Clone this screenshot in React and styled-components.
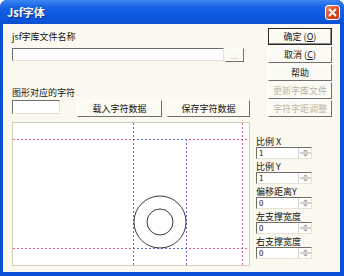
import React from 'react';
import styled, { createGlobalStyle } from 'styled-components';

const GlobalStyle = createGlobalStyle`
  html, body {
    margin: 0;
    padding: 0;
    background: #ffffff;
  }
  body {
    font-family: "Noto Sans CJK SC", "Noto Sans", sans-serif;
  }
`;

const Frame = styled.div`
  width: 344px;
  height: 276px;
  box-sizing: border-box;
  background: #0b4fd4;
  border-radius: 7px 7px 0 0;
  display: flex;
  flex-direction: column;
  overflow: hidden;
`;

const TitleBar = styled.div`
  height: 24px;
  flex: none;
  display: flex;
  align-items: center;
  justify-content: space-between;
  padding: 0 4px 0 7px;
  background: linear-gradient(#3d86f4 0%, #1763e6 30%, #0c57de 70%, #0b4fd0 100%);
  color: #ffffff;
  font-size: 11px;
  font-weight: bold;
  text-shadow: 1px 1px 0 #0a2f8a;
`;

const CloseButton = styled.div`
  width: 15px;
  height: 15px;
  box-sizing: border-box;
  border: 1px solid #ffffff;
  border-radius: 3px;
  background: linear-gradient(135deg, #ee8a62, #d4451f 60%, #b83a1a);
  display: flex;
  align-items: center;
  justify-content: center;
`;

const Body = styled.div`
  flex: 1;
  margin: 0 4px 4px 3px;
  background: #fbf9ef;
  display: flex;
  gap: 6px;
  padding: 4px 8px 0 9px;
  font-size: 9px;
  line-height: 11px;
  color: #111;
`;

const LeftColumn = styled.div`
  width: 238px;
  flex: none;
  display: flex;
  flex-direction: column;
  padding-top: 3px;
`;

const RightColumn = styled.div`
  flex: 1;
  display: flex;
  flex-direction: column;
`;

const Label = styled.div`
  height: 11px;
  margin-top: ${p => p.$gap || 0}px;
  white-space: nowrap;
`;

const Row = styled.div`
  display: flex;
  align-items: flex-start;
  margin-top: ${p => p.$gap || 0}px;
  gap: ${p => p.$spacing || 0}px;
`;

const TextBox = styled.div`
  width: ${p => p.$width}px;
  height: ${p => p.$height}px;
  box-sizing: border-box;
  background: #ffffff;
  border-top: 1px solid #6e6e6e;
  border-left: 1px solid #6e6e6e;
  border-bottom: 1px solid #e6e2d4;
  border-right: 1px solid #e6e2d4;
  margin-right: ${p => p.$after || 0}px;
`;

const Button = styled.div`
  width: ${p => p.$width}px;
  height: ${p => p.$height || 17}px;
  box-sizing: border-box;
  display: flex;
  align-items: center;
  justify-content: center;
  background: #fcfbf3;
  border-top: 1px solid #ffffff;
  border-left: 1px solid #ffffff;
  border-right: 1px solid #6f6f6f;
  border-bottom: 1px solid #6f6f6f;
  color: ${p => (p.$disabled ? '#b9b6a8' : '#111')};
  white-space: nowrap;
  flex: none;
`;

const DefaultButton = styled(Button)`
  border: 1px solid #2a2a2a;
  box-shadow: inset -1px -1px 0 #8a8a8a;
`;

const ButtonStack = styled.div`
  display: flex;
  flex-direction: column;
  align-items: flex-end;
  gap: 1px;
`;

const Canvas = styled.div`
  margin-top: 5px;
  width: 238px;
  height: 144px;
  box-sizing: border-box;
  background: #ffffff;
  border: 1px solid #d3cdbd;
  display: flex;
`;

const Fields = styled.div`
  margin-top: 19px;
  display: flex;
  flex-direction: column;
  gap: 2px;
`;

const Field = styled.div`
  display: flex;
  flex-direction: column;
`;

const SpinBox = styled.div`
  width: 56px;
  height: 12px;
  box-sizing: border-box;
  background: #ffffff;
  border-top: 1px solid #6e6e6e;
  border-left: 1px solid #6e6e6e;
  border-bottom: 1px solid #e6e2d4;
  border-right: 1px solid #e6e2d4;
  display: flex;
  align-items: center;
  justify-content: space-between;
  padding-left: 2px;
  font-size: 8px;
  line-height: 10px;
`;

const SpinArrows = () => (
  <svg width="13" height="10" viewBox="0 0 13 10">
    <line x1="0.5" y1="0" x2="0.5" y2="10" stroke="#d8d4c6" />
    <line x1="2" y1="5" x2="13" y2="5" stroke="#a8a498" />
    <path d="M5 3.5 L7.5 1.5 L10 3.5 Z" fill="#9a968a" />
    <path d="M5 6.5 L7.5 8.5 L10 6.5 Z" fill="#9a968a" />
  </svg>
);

const Guides = () => (
  <svg width="236" height="142" viewBox="0 0 236 142">
    <g strokeWidth="1" strokeDasharray="2 2" fill="none">
      <line x1="0" y1="16.5" x2="236" y2="16.5" stroke="#e0607a" />
      <line x1="0" y1="125.5" x2="236" y2="125.5" stroke="#e0607a" />
      <line x1="120" y1="16.5" x2="173" y2="16.5" stroke="#6a68d4" strokeDasharray="2 2" />
      <line x1="120" y1="125.5" x2="173" y2="125.5" stroke="#6a68d4" />
      <line x1="120.5" y1="0" x2="120.5" y2="142" stroke="#6a68d4" />
      <line x1="173.5" y1="16" x2="173.5" y2="142" stroke="#6a68d4" />
      <line x1="229.5" y1="0" x2="229.5" y2="142" stroke="#e0607a" />
    </g>
    <circle cx="147" cy="99" r="26" fill="none" stroke="#3a3a3a" strokeWidth="1" />
    <circle cx="147" cy="99" r="13" fill="none" stroke="#3a3a3a" strokeWidth="1" />
  </svg>
);

const fields = [
  { label: '比例 X', value: '1' },
  { label: '比例 Y', value: '1' },
  { label: '偏移距离Y', value: '0' },
  { label: '左支撑宽度', value: '0' },
  { label: '右支撑宽度', value: '0' },
];

const App = () => (
  <>
    <GlobalStyle />
    <Frame>
      <TitleBar>
        <span>Jsf字体</span>
        <CloseButton>
          <svg width="9" height="9" viewBox="0 0 9 9">
            <path d="M1.5 1.5 L7.5 7.5 M7.5 1.5 L1.5 7.5" stroke="#ffffff" strokeWidth="1.8" strokeLinecap="round" />
          </svg>
        </CloseButton>
      </TitleBar>
      <Body>
        <LeftColumn>
          <Label>jsf字库文件名称</Label>
          <Row $gap={6} $spacing={1}>
            <TextBox $width={212} $height={13} />
            <Button $width={19} $height={14} $disabled>...</Button>
          </Row>
          <Label $gap={25}>图形对应的字符</Label>
          <Row $gap={2} $spacing={5}>
            <TextBox $width={48} $height={14} $after={12} />
            <Button $width={85}>载入字符数据</Button>
            <Button $width={83}>保存字符数据</Button>
          </Row>
          <Canvas>
            <Guides />
          </Canvas>
        </LeftColumn>
        <RightColumn>
          <ButtonStack>
            <DefaultButton $width={64}>确定 (<u>O</u>)</DefaultButton>
            <Button $width={64}>取消 (<u>C</u>)</Button>
            <Button $width={64}>帮助</Button>
            <Button $width={64} $disabled>更新字库文件</Button>
            <Button $width={64} $disabled>字符字距调整</Button>
          </ButtonStack>
          <Fields>
            {fields.map(f => (
              <Field key={f.label}>
                <Label>{f.label}</Label>
                <SpinBox>
                  <span>{f.value}</span>
                  <SpinArrows />
                </SpinBox>
              </Field>
            ))}
          </Fields>
        </RightColumn>
      </Body>
    </Frame>
  </>
);

export default App;
